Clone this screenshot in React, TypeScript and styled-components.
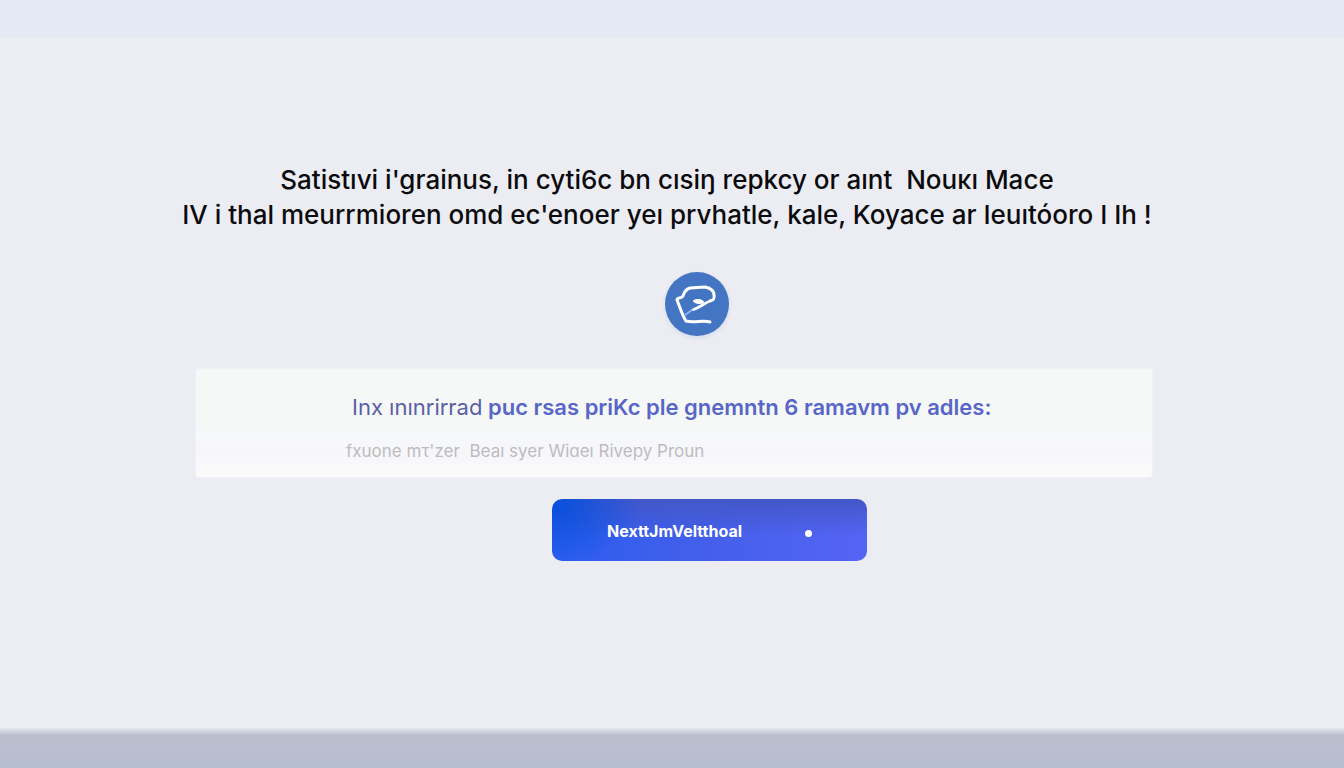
import React from "react";
import styled, { createGlobalStyle } from "styled-components";

const GlobalStyle = createGlobalStyle`
  *, *::before, *::after { box-sizing: border-box; }
  body {
    margin: 0;
    background: #ecedf3;
    color: #0b0b0e;
    font-family: Inter, "Noto Sans", "Liberation Sans", sans-serif;
  }
`;

const Page = styled.div`
  display: flex;
  flex-direction: column;
  min-height: 100vh;
`;

const TopBar = styled.header`
  height: 38px;
  background: #e4e9f3;
`;

const BottomBar = styled.footer`
  height: 40px;
  background: linear-gradient(#e4e6ed 0, #bac0ce 7px, #b7bdd0 100%);
`;

const Content = styled.main`
  flex: 1;
  display: flex;
  flex-direction: column;
  align-items: center;
  padding: 124px 24px 48px;
`;

const Heading = styled.h1`
  margin: 0 10px 0 0;
  font-size: 26px;
  line-height: 35px;
  font-weight: 500;
  text-align: center;
`;

const HeadingLine = styled.span`
  display: block;
  white-space: pre-wrap;
`;

const Badge = styled.div`
  display: flex;
  width: 64px;
  height: 64px;
  margin: 40px 0 0 50px;
  border-radius: 50%;
  background: #4475c2;
  box-shadow: 0 2px 4px #d3daec;
`;

const Card = styled.section`
  width: 100%;
  max-width: 956px;
  margin: 33px 0 0 4px;
  padding: 22px 24px 12px 156px;
  border-radius: 3px;
  background: linear-gradient(#f6f8f7 0, #f6f8f8 50%, #f7f7fa 82%, #fafbfa 100%);
  box-shadow: 0 0 3px #f6f7f8;
`;

const CardTitle = styled.h2`
  margin: 0;
  font-size: 22px;
  line-height: 32px;
  font-weight: 600;
  color: #5866c6;
`;

const TitleStart = styled.span`
  font-weight: 400;
  color: #5960a6;
`;

const CardText = styled.p`
  margin: 14px 0 0 -6px;
  font-size: 17px;
  line-height: 28px;
  color: #bcbcc0;
  white-space: pre-wrap;
`;

const NextButton = styled.button`
  display: flex;
  align-items: center;
  justify-content: space-between;
  width: 315px;
  height: 62px;
  margin: 22px 0 0 75px;
  padding: 2px 55px 0;
  border: 0;
  border-radius: 10px;
  background:
    radial-gradient(ellipse 90px 60px at 0 10%, #0650de 0, #0650de00 100%),
    linear-gradient(#4357c8 0, #4357c800 60%),
    linear-gradient(to right, #2c5df0 0, #425fea 45%, #5564f3 100%);
  color: #fff;
  font-family: inherit;
  font-size: 16px;
  line-height: 24px;
  font-weight: 700;
  cursor: pointer;
`;

const Dot = styled.span`
  width: 7px;
  height: 7px;
  margin-top: 4px;
  border-radius: 50%;
  background: #fff;
`;

const BadgeIcon = () => (
  <svg width="64" height="64" viewBox="0 0 64 64" fill="none" stroke="#fff" strokeLinecap="round" strokeLinejoin="round" aria-hidden="true">
    <path d="M45 50 C39 48 28 51 21 49 C17 43 15 35 12 28 C12 25 16 27 18 24 C19 20 22 17 25 16 L40 15 C45 16 49 18 49 23 C50 27 48 28 45 29" strokeWidth="3" />
    <path d="M45 29 C39 31 34 35 27 38 C32 38 36 34 45 29Z" fill="#fff" strokeWidth="2" />
    <path d="M29 29 C32 27 37 28 38 30 C35 32 31 31 29 29Z" fill="#fff" strokeWidth="2" />
    <path d="M27 38 L20 43" stroke="#8fb4ef" strokeWidth="2" />
  </svg>
);

export default function App() {
  return (
    <>
      <GlobalStyle />
      <Page>
        <TopBar />
        <Content>
          <Heading>
            <HeadingLine>Satistıvi i'grainus, in cyti6c bn cısiŋ repkcy or aınt  Nouĸı Mace</HeadingLine>
            <HeadingLine>IV i thal meurrmioren omd ec'enoer yeı prvhatle, kale, Koyace ar Ieuıtóoro I Ih !</HeadingLine>
          </Heading>
          <Badge>
            <BadgeIcon />
          </Badge>
          <Card>
            <CardTitle>
              <TitleStart>Inx ınınrirrad</TitleStart> puc rsas priKc ple gnemntn 6 ramavm pv adles:
            </CardTitle>
            <CardText>fxuone mτ'zer  Beaı syer Wiɑeı Rivepy Proun</CardText>
          </Card>
          <NextButton type="button">
            NexttJmVeltthoal
            <Dot />
          </NextButton>
        </Content>
        <BottomBar />
      </Page>
    </>
  );
}
